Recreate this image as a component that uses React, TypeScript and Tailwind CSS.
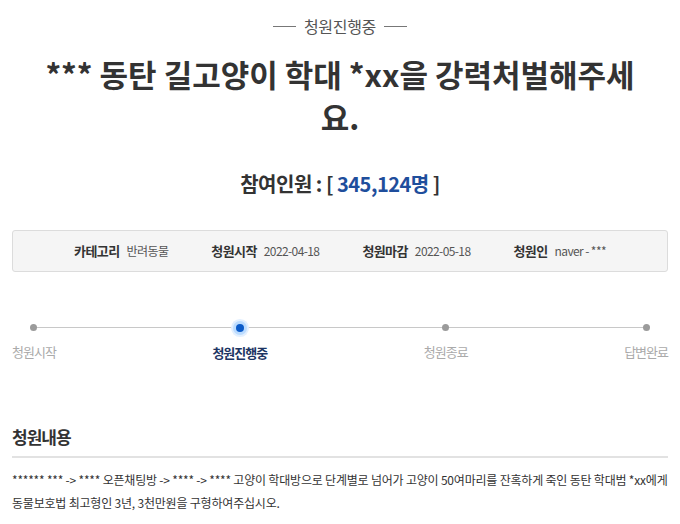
const FONT = "font-['Noto_Sans_CJK_KR','Noto_Sans',sans-serif]";

const INFO = [
  { label: '카테고리', value: '반려동물' },
  { label: '청원시작', value: '2022-04-18' },
  { label: '청원마감', value: '2022-05-18' },
  { label: '청원인', value: 'naver - ***' },
];

const STEPS = [
  { name: '청원시작', active: false },
  { name: '청원진행중', active: true },
  { name: '청원종료', active: false },
  { name: '답변완료', active: false },
];

export default function App() {
  return (
    <div className={`${FONT} w-[680px] h-[524px] overflow-hidden bg-white px-3 text-[#333]`}>
      <div className="flex items-center justify-center gap-2 pt-[15px]">
        <span className="h-px w-[23px] bg-[#777]" />
        <span className="text-[16px] leading-[22px] tracking-[-0.3px] text-[#555]">청원진행중</span>
        <span className="h-px w-[23px] bg-[#777]" />
      </div>

      <h1 className="mx-auto mt-[15px] w-[610px] text-center text-[31px] font-bold leading-[43px] text-[#333]">
        *** 동탄 길고양이 학대 *xx을 강력처벌해주세요.
      </h1>

      <p className="mt-[33px] text-center text-[20px] font-bold leading-[26px] tracking-[-0.5px]">
        참여인원 : [ <span className="text-[#1f4e9c]">345,124명</span> ]
      </p>

      <div className="mt-[33px] flex h-[42px] items-center justify-center gap-[43px] rounded-[3px] border border-[#dcdcdc] bg-[#f5f5f5]">
        {INFO.map(i => (
          <div key={i.label} className="flex items-center gap-[7px] tracking-[-0.6px]">
            <span className="text-[13px] font-bold text-[#333]">{i.label}</span>
            <span className="text-[12px] text-[#555]">{i.value}</span>
          </div>
        ))}
      </div>

      <div className="relative mt-[52px] flex justify-between">
        <div className="absolute left-[21px] right-[22px] top-[3px] h-px bg-[#c8c8c8]" />
        {STEPS.map(s => (
          <div key={s.name} className="relative flex flex-col items-center">
            {s.active ? (
              <span className="h-[8px] w-[8px] rounded-full bg-[#0b5bc9] shadow-[0_0_0_3px_#bcdcff,0_0_0_5px_#e3f0ff]" />
            ) : (
              <span className="h-[7px] w-[7px] rounded-full bg-[#9b9b9b]" />
            )}
            <span
              className={`mt-[12px] text-[13px] leading-[18px] tracking-[-1px] ${
                s.active ? 'font-bold text-[#1d3563]' : 'text-[#aaa]'
              }`}
            >
              {s.name}
            </span>
          </div>
        ))}
      </div>

      <h2 className="mt-[63px] border-b-2 border-[#e2e2e2] pb-[7px] text-[17px] font-bold leading-[24px] tracking-[-1px]">
        청원내용
      </h2>

      <p className="mt-[10px] whitespace-nowrap text-[12px] leading-[23px] tracking-[-0.2px] text-[#333]">
        ****** *** -&gt; **** 오픈채팅방 -&gt; **** -&gt; **** 고양이 학대방으로 단계별로 넘어가 고양이 50여마리를 잔혹하게 죽인 동탄 학대범 *xx에게
        <br />
        동물보호법 최고형인 3년, 3천만원을 구형하여주십시오.
      </p>
    </div>
  );
}
